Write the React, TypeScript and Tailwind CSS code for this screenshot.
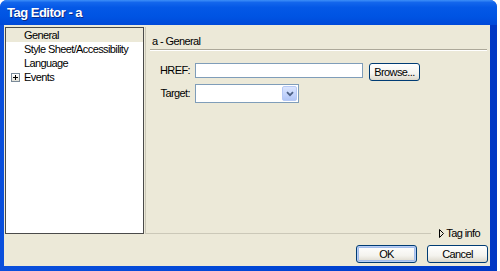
export default function App() {
  const font = "font-['Liberation_Sans',Arial,sans-serif]";
  return (
    <div className={`w-[500px] h-[271px] bg-white overflow-hidden ${font} text-[11px] tracking-[-0.6px] text-black whitespace-nowrap`}>
      <div className="w-[497px] h-[271px] flex flex-col rounded-t-[7px] overflow-hidden bg-[linear-gradient(to_right,#0a4fdc,#0047d6_50%,#0038c4)]">
        {/* Title bar */}
        <div className="h-[25px] shrink-0 flex items-center pl-[7px] pt-[1px] bg-[linear-gradient(to_bottom,#3d8ff8_0%,#1366ec_10%,#0458e6_30%,#0054e3_65%,#0049d9_100%)]">
          <span className="text-white font-bold text-[13px] tracking-[-0.5px] [text-shadow:1px_1px_0_#0a2a8a]">
            Tag Editor - a
          </span>
        </div>
        {/* Body */}
        <div className="flex-1 ml-[4px] mr-[7px] mb-[5px] bg-[#ece9d8] flex flex-col">
          <div className="flex pt-[2px] pl-[1px] h-[215px] shrink-0">
            {/* Left tree panel */}
            <div className="w-[139px] h-[207px] border border-[#4a4a4a] bg-white flex flex-col">
              <div className="h-[14px] leading-[14px] pl-[18px] bg-[#ece9d8]">General</div>
              <div className="h-[14px] leading-[14px] pl-[18px]">Style Sheet/Accessibility</div>
              <div className="h-[14px] leading-[14px] pl-[18px]">Language</div>
              <div className="h-[14px] flex items-center pl-[5px]">
                <div className="w-[9px] h-[9px] border border-[#7a8a99] bg-[linear-gradient(to_bottom,#ffffff,#e4e2d8)] flex items-center justify-center">
                  <svg width="5" height="5" viewBox="0 0 5 5">
                    <path d="M0 2.5H5M2.5 0V5" stroke="#000" strokeWidth="1" />
                  </svg>
                </div>
                <span className="ml-[4px] leading-[14px]">Events</span>
              </div>
            </div>
            {/* Right column */}
            <div className="flex-1 ml-[1px] flex flex-col">
              <div className="flex-1 border-l border-[#cbc8b8] flex flex-col">
                <div className="pl-[6px] pt-[8px] leading-[13px]">a - General</div>
                <div className="mt-[1px] ml-[4px] mr-[3px] h-[2px] border-t border-[#aca899] border-b border-b-white" />
                <div className="mt-[12px] flex items-start h-[18px]">
                  <div className="w-[44px] text-right leading-[15px]">HREF:</div>
                  <div className="ml-[5px] w-[168px] h-[15px] border border-[#7f9db9] bg-white" />
                  <div className="ml-[6px] w-[51px] h-[18px] border border-[#003c74] rounded-[3px] bg-[linear-gradient(to_bottom,#ffffff,#f4f3ee_60%,#dcd8cb)] flex items-center justify-center leading-[16px]">
                    Browse...
                  </div>
                </div>
                <div className="mt-[3px] flex items-start">
                  <div className="w-[44px] text-right leading-[19px]">Target:</div>
                  <div className="ml-[5px] w-[104px] h-[19px] border border-[#7f9db9] bg-white flex justify-end p-[1px]">
                    <div className="w-[15px] h-[15px] rounded-[2px] border border-[#b6c9f5] bg-[linear-gradient(to_bottom,#dbe5fd,#c2d3fc_60%,#b1c6f6)] flex items-center justify-center">
                      <svg width="8" height="6" viewBox="0 0 8 6">
                        <path d="M1 1.2 L4 4.2 L7 1.2" stroke="#4d6185" strokeWidth="1.8" fill="none" />
                      </svg>
                    </div>
                  </div>
                </div>
              </div>
              <div className="h-[13px] flex items-start shrink-0">
                <div className="flex-1 h-[7px] border-l border-b border-[#cbc8b8]" />
                <div className="flex items-center pl-[8px] pr-[10px] h-[13px]">
                  <svg width="5" height="9" viewBox="0 0 5 9">
                    <path d="M0.5 0.5 L4.5 4.5 L0.5 8.5 Z" stroke="#000" strokeWidth="1" fill="none" />
                  </svg>
                  <span className="ml-[2px] leading-[13px]">Tag info</span>
                </div>
              </div>
            </div>
          </div>
          {/* Buttons */}
          <div className="flex justify-end gap-[10px] pt-[5px] pr-[2px]">
            <div className="w-[61px] h-[18px] border border-[#003c74] rounded-[3px] bg-[linear-gradient(to_bottom,#ffffff,#f4f3ee_60%,#dcd8cb)] shadow-[inset_0_0_0_1px_#b7cdf5,inset_0_0_0_2px_#a3bdea] flex items-center justify-center leading-[16px]">
              OK
            </div>
            <div className="w-[61px] h-[18px] border border-[#003c74] rounded-[3px] bg-[linear-gradient(to_bottom,#ffffff,#f4f3ee_60%,#dcd8cb)] flex items-center justify-center leading-[16px]">
              Cancel
            </div>
          </div>
        </div>
      </div>
    </div>
  );
}
